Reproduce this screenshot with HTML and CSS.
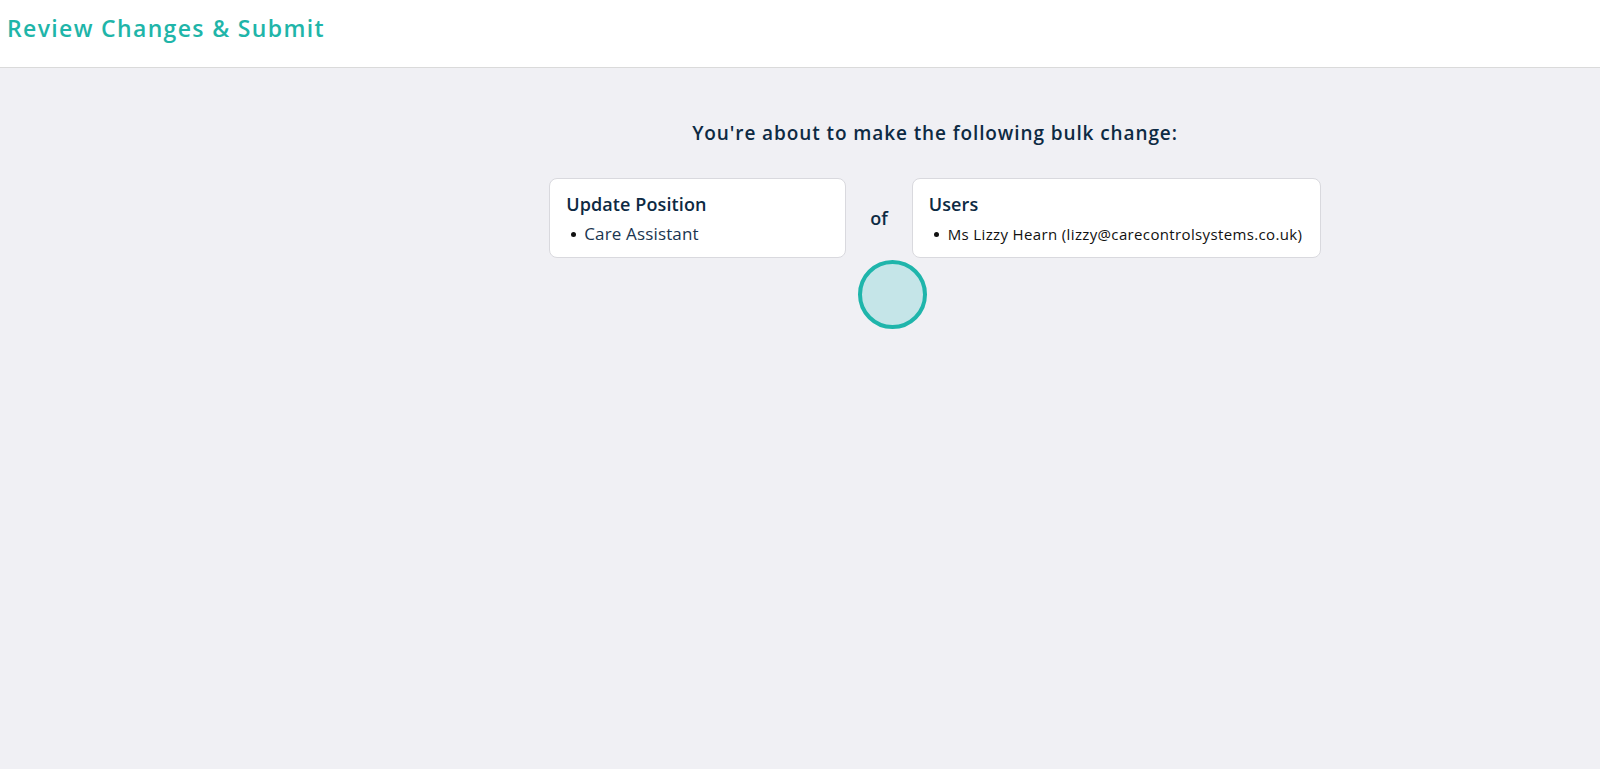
FILE: index.html
```html
<!DOCTYPE html>
<html>
<head>
<meta charset="utf-8">
<link rel="stylesheet" href="styles.css">
</head>
<body>
<header class="topbar">
  <h1 class="title">Review Changes &amp; Submit</h1>
</header>
<div class="layout">
  <div class="side-space"></div>
  <main class="content">
    <h2 class="lead">You're about to make the following bulk change:</h2>
    <div class="summary">
      <section class="card card-change">
        <h3 class="card-title">Update Position</h3>
        <ul class="items">
          <li class="item item-navy">Care Assistant</li>
        </ul>
      </section>
      <div class="joiner">of</div>
      <section class="card card-users">
        <h3 class="card-title">Users</h3>
        <ul class="items">
          <li class="item">Ms Lizzy Hearn (lizzy@carecontrolsystems.co.uk)</li>
        </ul>
      </section>
    </div>
  </main>
</div>
<div class="click-ring"></div>
</body>
</html>
```
FILE: styles.css
```css
* { box-sizing: border-box; }
html, body { margin: 0; padding: 0; }
body {
  background: #f0f0f4;
  font-family: "Open Sans", "Liberation Sans", sans-serif;
  color: #0d2a43;
  min-height: 769px;
}
.topbar {
  background: #ffffff;
  height: 68px;
  border-bottom: 1px solid #dadada;
  display: flex;
  align-items: flex-start;
  padding: 12px 0 0 7px;
}
.title {
  margin: 0;
  font-size: 23px;
  font-weight: 600;
  color: #1fb5a9;
  line-height: 32px;
  letter-spacing: 1.35px;
}
.layout {
  display: flex;
}
.side-space {
  width: 270px;
  flex: none;
}
.content {
  flex: 1;
  display: flex;
  flex-direction: column;
  align-items: center;
  padding-top: 51px;
}
.lead {
  margin: 0;
  font-size: 19px;
  font-weight: 600;
  line-height: 28px;
  color: #0d2a43;
  letter-spacing: 0.9px;
}
.summary {
  display: flex;
  align-items: center;
  gap: 24px;
  margin-top: 31px;
}
.card {
  background: #ffffff;
  border: 1px solid #d9d9de;
  border-radius: 8px;
  height: 80px;
  padding: 12px 16px;
}
.card-change { width: 297px; }
.card-users { width: 409px; }
.card-title {
  margin: 0;
  font-size: 18px;
  font-weight: 600;
  line-height: 26px;
  color: #0d2a43;
  letter-spacing: 0.1px;
}
.items {
  list-style: none;
  margin: 6px 0 0 0;
  padding: 0;
  font-size: 15px;
  line-height: 22px;
}
.item {
  display: flex;
  align-items: center;
  white-space: nowrap;
  color: #111111;
  letter-spacing: 0.36px;
}
.item::before {
  content: "";
  width: 5px;
  height: 5px;
  border-radius: 50%;
  background: #111111;
  margin: 0 9px 0 5px;
  flex: none;
}
.item-navy {
  color: #1a3550;
  font-size: 17px;
  letter-spacing: 0.15px;
}
.item-navy::before { margin-right: 8px; }
.joiner {
  font-size: 18px;
  font-weight: 600;
  color: #0d2a43;
}
.click-ring {
  position: absolute;
  left: 858px;
  top: 260px;
  width: 69px;
  height: 69px;
  border-radius: 50%;
  background: #c5e5e8;
  border: 4px solid #1fb5ab;
}
```
